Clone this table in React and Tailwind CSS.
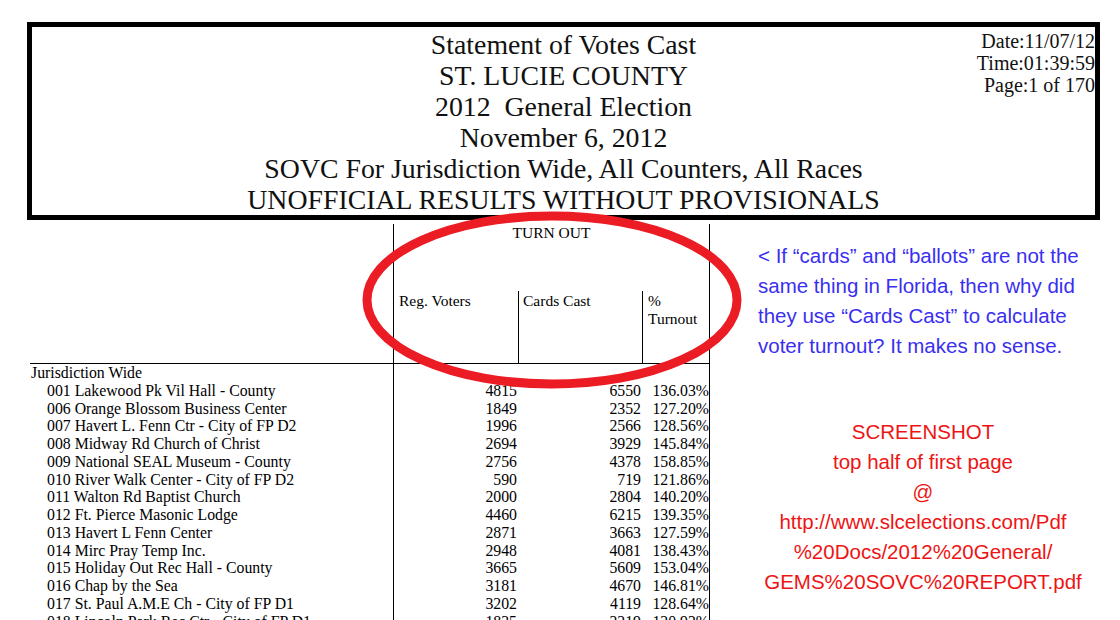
import React from "react";

const rows = [
  ["001 Lakewood Pk Vil Hall - County", "4815", "6550", "136.03%"],
  ["006 Orange Blossom Business Center", "1849", "2352", "127.20%"],
  ["007 Havert L. Fenn Ctr - City of FP D2", "1996", "2566", "128.56%"],
  ["008 Midway Rd Church of Christ", "2694", "3929", "145.84%"],
  ["009 National SEAL Museum - County", "2756", "4378", "158.85%"],
  ["010 River Walk Center - City of FP D2", "590", "719", "121.86%"],
  ["011 Walton Rd Baptist Church", "2000", "2804", "140.20%"],
  ["012 Ft. Pierce Masonic Lodge", "4460", "6215", "139.35%"],
  ["013 Havert L Fenn Center", "2871", "3663", "127.59%"],
  ["014 Mirc Pray Temp Inc.", "2948", "4081", "138.43%"],
  ["015 Holiday Out Rec Hall - County", "3665", "5609", "153.04%"],
  ["016 Chap by the Sea", "3181", "4670", "146.81%"],
  ["017 St. Paul A.M.E Ch - City of FP D1", "3202", "4119", "128.64%"],
  ["018 Lincoln Park Rec Ctr - City of FP D1", "1835", "2219", "120.93%"],
];

const App = () => {
  return (
    <div className="relative w-[1120px] h-[620px] overflow-hidden bg-white font-['Liberation_Serif','Times_New_Roman',serif] text-[#111]">
      {/* Report header box */}
      <div className="pt-[22px] pl-[27px]">
        <div className="grid grid-cols-[1fr_auto_1fr] w-[1073px] h-[198px] border-[5px] border-black">
          <div />
          <div className="pt-[2px] text-center text-[27.8px] leading-[31px] whitespace-nowrap">
            <div>Statement of Votes Cast</div>
            <div>ST. LUCIE COUNTY</div>
            <div>2012{"\u00a0"} General Election</div>
            <div>November 6, 2012</div>
            <div>SOVC For Jurisdiction Wide, All Counters, All Races</div>
            <div>UNOFFICIAL RESULTS WITHOUT PROVISIONALS</div>
          </div>
          <div className="pt-[3px] text-right text-[20px] leading-[22px]">
            <div>Date:11/07/12</div>
            <div>Time:01:39:59</div>
            <div>Page:1 of 170</div>
          </div>
        </div>
      </div>

      <div className="flex">
        {/* Table */}
        <div className="ml-[30px] w-[680px] text-[15.5px] text-black">
          <div className="flex h-[144px] border-b border-black">
            <div className="w-[363px]" />
            <div className="flex flex-col w-[317px] mt-[4px] border-x border-black">
              <div className="text-center leading-[18px]">TURN OUT</div>
              <div className="grid grid-cols-[124px_124px_67px] mt-auto h-[72px] leading-[18px]">
                <div className="pl-[5px] pt-[1px]">Reg. Voters</div>
                <div className="pl-[4px] pt-[1px] border-l border-black">Cards Cast</div>
                <div className="pl-[5px] pt-[1px] border-l border-black">
                  %<br />
                  Turnout
                </div>
              </div>
            </div>
          </div>
          <div className="grid grid-cols-[363px_125px_124px_68px] text-[15.8px] leading-[17.75px]">
            <div className="pl-[1px]">Jurisdiction Wide</div>
            <div className="border-l border-black" />
            <div />
            <div className="border-r border-black" />
            {rows.map(([name, reg, cards, pct]) => (
              <React.Fragment key={name}>
                <div className="pl-[17px] whitespace-nowrap">{name}</div>
                <div className="pr-[1px] text-right border-l border-black">{reg}</div>
                <div className="pr-[1px] text-right">{cards}</div>
                <div className="text-right border-r border-black">{pct}</div>
              </React.Fragment>
            ))}
          </div>
        </div>

        {/* Annotations */}
        <div className="ml-[48px] w-[330px] pt-[21px] font-['Liberation_Sans',Arial,sans-serif] text-[20.5px] leading-[30px]">
          <p className="text-[#3a2ff0] whitespace-nowrap">
            &lt; If “cards” and “ballots” are not the
            <br />
            same thing in Florida, then why did
            <br />
            they use “Cards Cast” to calculate
            <br />
            voter turnout? It makes no sense.
          </p>
          <p className="mt-[56px] text-center text-[#ee1414] whitespace-nowrap">
            SCREENSHOT
            <br />
            top half of first page
            <br />
            @
            <br />
            http://www.slcelections.com/Pdf
            <br />
            %20Docs/2012%20General/
            <br />
            GEMS%20SOVC%20REPORT.pdf
          </p>
        </div>
      </div>

      {/* Hand-drawn red circle over the turnout header */}
      <svg
        className="absolute left-0 top-0 pointer-events-none"
        width="1120"
        height="620"
        viewBox="0 0 1120 620"
      >
        <ellipse cx="552" cy="300" rx="185" ry="84" fill="none" stroke="#ec1c24" strokeWidth="9" />
      </svg>
    </div>
  );
};

export default App;
